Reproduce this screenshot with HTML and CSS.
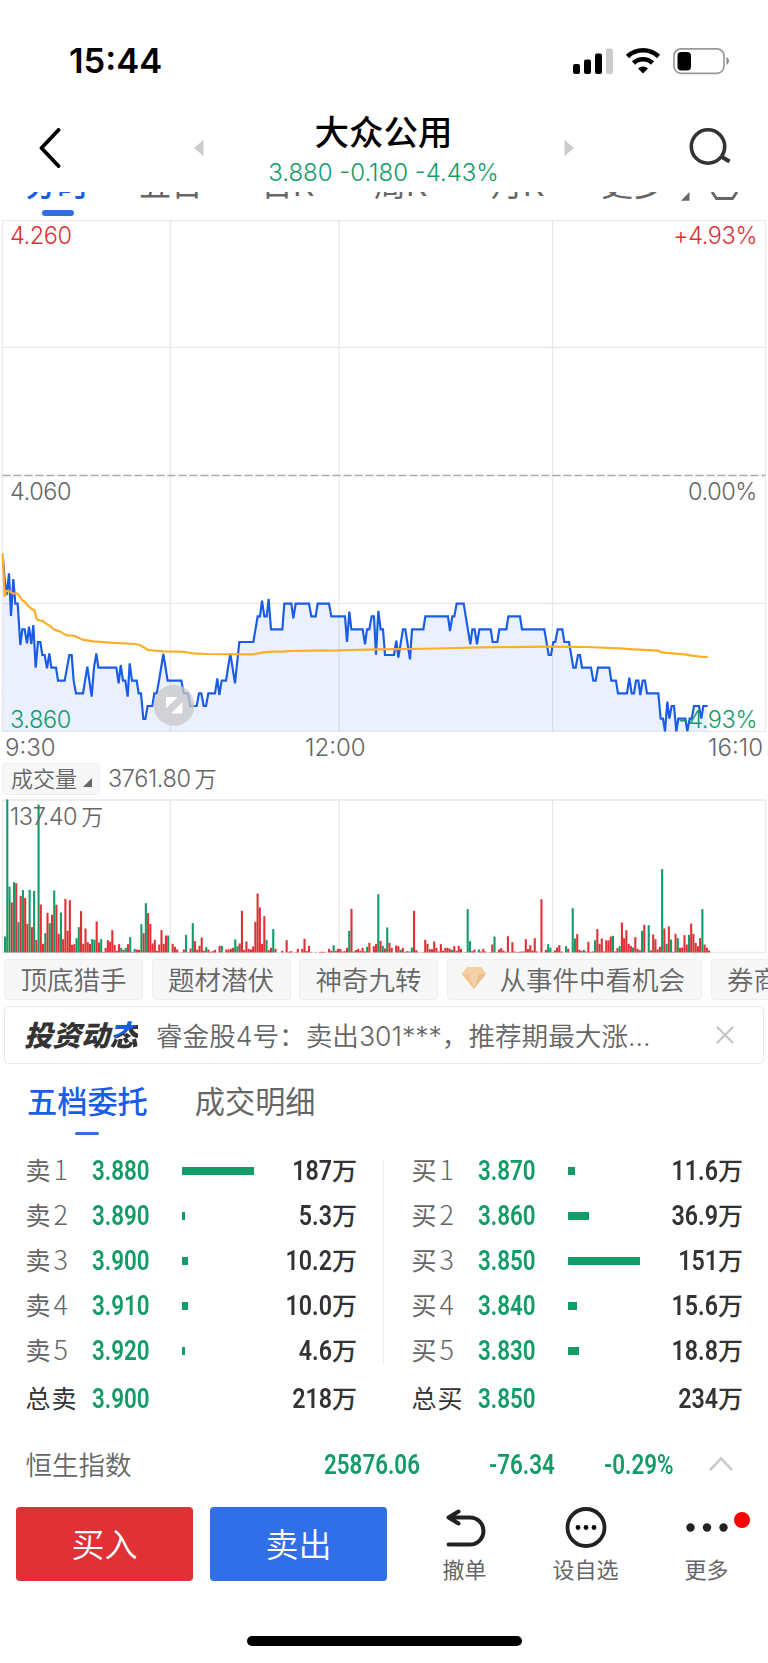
FILE: index.html
```html
<!DOCTYPE html>
<html lang="zh-CN">
<head>
    <meta charset="UTF-8">
    <meta name="viewport" content="width=device-width, initial-scale=1.0">
    <title>大众公用</title>
    <link rel="stylesheet" href="styles.css">
</head>
<body>
    <!-- Status bar -->
    <div class="status-bar">
        <span class="clock">15:44</span>
        <svg class="status-icons" width="160" height="28" viewBox="0 0 160 28">
            <rect x="1" y="16" width="7" height="10" rx="2"/>
            <rect x="12" y="11.500" width="7" height="14.500" rx="2"/>
            <rect x="23" y="5.500" width="7" height="20.500" rx="2"/>
            <rect x="34" y="0.500" width="7" height="25.500" rx="2" fill="#ccc"/>
            <g fill="none" stroke="#000" stroke-width="4.600">
                <path d="M55.500 8.500a22.500 22.500 0 0 1 31 0"/>
                <path d="M61.500 15a13.800 13.800 0 0 1 19 0"/>
            </g>
            <path d="M71 25.500l-5-5a7.300 7.300 0 0 1 10 0z"/>
            <rect x="102" y="0.800" width="50" height="24.500" rx="7" fill="none" stroke="#999" stroke-width="1.700"/>
            <rect x="105.500" y="4" width="13.500" height="18.500" rx="4"/>
            <path d="M154.500 9q2.500 1.200 2.500 4t-2.500 4z" fill="#888"/>
        </svg>
    </div>

    <!-- Title bar -->
    <div class="nav-bar">
        <svg class="back" width="22" height="40" viewBox="0 0 22 40"><path d="M19.500 2L2.500 20L19.500 38" fill="none" stroke="#000" stroke-width="3.800" stroke-linecap="round" stroke-linejoin="round"/></svg>
        <svg class="prev" width="10" height="16" viewBox="0 0 10 16"><path d="M9.500 0v16L0 8z" fill="#ccc"/></svg>
        <div class="stock">
            <h1>大众公用</h1>
            <p class="quote">3.880 -0.180 -4.43%</p>
        </div>
        <svg class="next" width="10" height="16" viewBox="0 0 10 16"><path d="M.5 0v16L10 8z" fill="#ccc"/></svg>
        <svg class="search" width="42" height="40" viewBox="0 0 42 40" fill="none" stroke="#333" stroke-width="3.600"><circle cx="19" cy="19.500" r="16.700"/><path d="M33 30l7.500 4.500" stroke-width="4.200"/></svg>
    </div>

    <!-- Period tabs, partly scrolled under the title bar -->
    <div class="periods">
        <span class="active">分时</span>
        <span>五日</span>
        <span>日K</span>
        <span>周K</span>
        <span>月K</span>
        <span>更多</span>
        <svg width="60" height="28" viewBox="0 0 60 28"><path d="M8.500 0v8.800H0z" fill="#666"/><path d="M31 0l4.500 6.500h16L56 0" fill="none" stroke="#666" stroke-width="2.800"/></svg>
    </div>

    <!-- Price chart -->
    <svg class="chart" width="768" height="512" viewBox="0 0 768 512">
        <g class="grid">
            <path d="M2.500 .5H765.500V511.500H2.500zM2.500 127.500H765.500M2.500 383.500H765.500M170.500 .5V511M339 .5V511M552.500 .5V511"/>
            <path class="dashed" d="M2.500 255.500H765.500"/>
        </g>
        <g id="price" transform="scale(.33333) translate(0 930)"></g>
        <circle cx="174" cy="485.300" r="20.500" fill="#c8c8c8" fill-opacity=".75"/>
        <path d="M166 477h11.500L166 488.500zM182.500 482v11.500H171z" fill="#fff"/>
        <text class="up" x="10" y="24">4.260</text>
        <text class="up end" x="757" y="24">+4.93%</text>
        <text x="10" y="280">4.060</text>
        <text class="end" x="757" y="280">0.00%</text>
        <text class="down" x="10" y="508">3.860</text>
        <text class="down end" x="757" y="508">-4.93%</text>
    </svg>
    <div class="times">
        <span>9:30</span>
        <span>12:00</span>
        <span>16:10</span>
    </div>

    <!-- Volume -->
    <div class="volume-head">
        <span class="indicator">成交量<svg width="9" height="9" viewBox="0 0 9 9"><path d="M9 0v9H0z" fill="#666"/></svg></span>
        <span>3761.80<i>万</i></span>
    </div>
    <svg class="chart" width="768" height="154" viewBox="0 0 768 154">
        <path class="grid" d="M2.500 1H765.500V153.500H2.500zM170.500 1V153M339 1V153M552.500 1V153"/>
        <g id="volume"></g>
        <text x="10" y="26">137.40<tspan class="unit" dx="4">万</tspan></text>
    </svg>

    <!-- Strategy chips -->
    <div class="chips">
        <span>顶底猎手</span>
        <span>题材潜伏</span>
        <span>神奇九转</span>
        <span class="gem"><svg width="24" height="22" viewBox="0 0 24 22"><path d="M5 0h14l5 7-12 15L0 7z" fill="#eebf8b"/><path d="M5 0h14l5 7H0z" fill="#f6cfa2"/><path d="M7 7h10l-5 15z" fill="#f2d2ac"/><path d="M0 7l12 15L7 7z" fill="#f5c48d"/></svg>从事件中看机会</span>
        <span>券商金股</span>
    </div>

    <div class="notice">
        <strong class="brand">投资动<span>态</span></strong>
        <span class="message">睿金股4号：卖出301***，推荐期最大涨…</span>
        <svg width="18" height="18" viewBox="0 0 18 18"><path d="M1.500 1.500l15 15M16.500 1.500l-15 15" stroke="#c6c6c6" stroke-width="2.400" stroke-linecap="round"/></svg>
    </div>

    <div class="book-tabs">
        <span class="active">五档委托</span>
        <span>成交明细</span>
    </div>

    <!-- Order book -->
    <div class="book">
        <div class="side sell">
            <div class="row"><span>卖<u>1</u></span><b class="num">3.880</b><i class="bar" style="width: 71.5px"></i><em><b class="num">187</b>万</em></div>
            <div class="row"><span>卖<u>2</u></span><b class="num">3.890</b><i class="bar" style="width: 2.5px"></i><em><b class="num">5.3</b>万</em></div>
            <div class="row"><span>卖<u>3</u></span><b class="num">3.900</b><i class="bar" style="width: 5.5px"></i><em><b class="num">10.2</b>万</em></div>
            <div class="row"><span>卖<u>4</u></span><b class="num">3.910</b><i class="bar" style="width: 5.5px"></i><em><b class="num">10.0</b>万</em></div>
            <div class="row"><span>卖<u>5</u></span><b class="num">3.920</b><i class="bar" style="width: 2.5px"></i><em><b class="num">4.6</b>万</em></div>
            <div class="row total"><span>总卖</span><b class="num">3.900</b><i></i><em><b class="num">218</b>万</em></div>
        </div>
        <div class="side buy">
            <div class="row"><span>买<u>1</u></span><b class="num">3.870</b><i class="bar" style="width: 6.5px"></i><em><b class="num">11.6</b>万</em></div>
            <div class="row"><span>买<u>2</u></span><b class="num">3.860</b><i class="bar" style="width: 20.5px"></i><em><b class="num">36.9</b>万</em></div>
            <div class="row"><span>买<u>3</u></span><b class="num">3.850</b><i class="bar" style="width: 71.5px"></i><em><b class="num">151</b>万</em></div>
            <div class="row"><span>买<u>4</u></span><b class="num">3.840</b><i class="bar" style="width: 8.5px"></i><em><b class="num">15.6</b>万</em></div>
            <div class="row"><span>买<u>5</u></span><b class="num">3.830</b><i class="bar" style="width: 11px"></i><em><b class="num">18.8</b>万</em></div>
            <div class="row total"><span>总买</span><b class="num">3.850</b><i></i><em><b class="num">234</b>万</em></div>
        </div>
    </div>

    <!-- Index ticker -->
    <div class="index-row">
        <span>恒生指数</span>
        <b class="num">25876.06</b>
        <b class="num">-76.34</b>
        <b class="num">-0.29%</b>
        <svg width="26" height="16" viewBox="0 0 26 16"><path d="M2 14L13 2.500L24 14" fill="none" stroke="#ccc" stroke-width="2.600"/></svg>
    </div>

    <!-- Bottom actions -->
    <div class="actions">
        <button class="buy-btn">买入</button>
        <button class="sell-btn">卖出</button>
        <div class="action">
            <svg width="42" height="42" viewBox="0 0 42 42" fill="none" stroke="#222" stroke-width="4" stroke-linecap="round" stroke-linejoin="round"><path d="M14.500 4.500L4.500 10.500L14.500 16.500M5 10.500H26a13.500 13.500 0 0 1 0 27H4.500"/></svg>
            <span>撤单</span>
        </div>
        <div class="action">
            <svg width="42" height="42" viewBox="0 0 42 42"><circle cx="21" cy="20.500" r="18.500" fill="none" stroke="#222" stroke-width="3.800"/><circle cx="13" cy="20.500" r="2.400"/><circle cx="21" cy="20.500" r="2.400"/><circle cx="29" cy="20.500" r="2.400"/></svg>
            <span>设自选</span>
        </div>
        <div class="action more">
            <svg width="42" height="42" viewBox="0 0 42 42" fill="#222"><circle cx="4.500" cy="20.500" r="4.200"/><circle cx="21" cy="20.500" r="4.200"/><circle cx="37.500" cy="20.500" r="4.200"/></svg>
            <span>更多</span>
        </div>
    </div>
    <div class="home-indicator"></div>

    <script src="chart.js"></script>
</body>
</html>
```

FILE: styles.css
```css
/* Global styles */
* {
    margin: 0;
    padding: 0;
    box-sizing: border-box;
}

body {
    width: 768px;
    height: 1663px;
    overflow: hidden;
    background: #fff;
    color: #666;
    font-family: Inter, 'Noto Sans CJK SC', sans-serif;
    font-size: 24px;
}

svg {
    display: block;
    flex: none;
}

i, em {
    font-style: normal;
}

u {
    text-decoration: none;
}

.status-bar {
    height: 110px;
    padding: 0 36px 0 69px;
    display: flex;
    justify-content: space-between;
    color: #000;
}

.clock {
    margin-top: 40px;
    font-size: 34.500px;
    font-weight: 600;
    line-height: 42px;
}

.status-icons {
    margin-top: 47.500px;
}

/* Title bar */
.nav-bar {
    height: 82px;
    display: flex;
    align-items: flex-start;
    padding-left: 38.500px;
}

.back {
    margin-top: 17.500px;
}

.prev {
    margin: 29.500px 0 0 133px;
}

.stock {
    width: 360px;
    text-align: center;
}

.stock h1 {
    margin-top: 3px;
    font-size: 34.500px;
    font-weight: 500;
    line-height: 40px;
    color: #000;
}

.quote {
    padding-top: 2px;
    line-height: 36px;
    font-weight: 350;
    color: #139c68;
}

.next {
    margin-top: 29.500px;
}

.search {
    margin: 17px 0 0 115.500px;
}

/* Period tabs */
.periods {
    height: 28px;
    overflow: hidden;
    display: grid;
    grid-template-columns: 114px 122px 113px 117px 110px 80px 60px;
    padding-left: 25px;
    font-size: 32px;
    line-height: 40px;
}

.periods span {
    margin-top: -27px;
}

.periods .active {
    color: #1a5ce6;
    font-weight: 500;
}

.periods .active::after {
    content: '';
    display: block;
    width: 32px;
    height: 6px;
    margin: 4.500px 0 0 17px;
    border-radius: 3px;
    background: #316fe8;
}

/* Charts */
.grid {
    fill: none;
    stroke: #e9e9e9;
    stroke-width: 1.3;
}

.dashed {
    stroke: #aaa;
    stroke-dasharray: 8 3;
}

.chart text {
    fill: #666;
    font-size: 23.500px;
    font-weight: 350;
    letter-spacing: -.4px;
}

.chart .up {
    fill: #e03137;
}

.chart .down {
    fill: #139c68;
}

.chart .end {
    text-anchor: end;
}

.chart .unit {
    font-size: 22px;
}

.price-area {
    fill: #316fe8;
    fill-opacity: .1;
}

.price-line {
    fill: none;
    stroke: #1a5ce6;
    stroke-width: 6.5;
}

.average-line {
    fill: none;
    stroke: #ffac26;
    stroke-width: 6.5;
}

.times {
    height: 30px;
    display: grid;
    grid-template-columns: 300px 1fr auto;
    padding: 0 5px;
    line-height: 31px;
    font-weight: 350;
}

.volume-head {
    height: 37px;
    display: flex;
    align-items: flex-start;
    gap: 8px;
    padding: 1px 0 0 2px;
    line-height: 32px;
    font-size: 23.500px;
    font-weight: 350;
    letter-spacing: -.4px;
}

.volume-head i {
    margin-left: 4px;
    font-size: 22px;
}

.indicator {
    width: 98px;
    height: 32px;
    display: flex;
    align-items: center;
    gap: 6px;
    padding-left: 8px;
    border: 1px solid #efefef;
    border-radius: 4px;
    background: #f7f7f7;
    font-size: 22px;
    letter-spacing: 0;
}

.indicator svg {
    margin-top: 6px;
}

/* Chips and notice */
.chips {
    width: 768px;
    height: 53px;
    overflow: hidden;
    display: flex;
    align-items: flex-start;
    gap: 8.500px;
    padding: 6px 0 0 4px;
    font-size: 26.500px;
    font-weight: 350;
}

.chips span {
    flex: none;
    display: flex;
    align-items: center;
    height: 41px;
    padding: 0 15.500px 2px;
    border: 1px solid #eee;
    border-radius: 4px;
    background: #f7f7f7;
}

.chips .gem {
    padding: 0 16px 2px 14px;
}

.chips svg {
    margin: 0 14px 2px 0;
}

.notice {
    width: 760px;
    height: 58px;
    margin-left: 4px;
    padding: 0 29px 0 19px;
    display: flex;
    align-items: center;
    border: 1.500px solid #e8e8e8;
    border-radius: 5px;
}

.brand {
    width: 132px;
    padding-bottom: 3px;
    font-size: 28.500px;
    font-weight: 900;
    font-style: italic;
    color: #333;
}

.brand span {
    background: linear-gradient(150deg, #1a5ce6 45%, #333 45%);
    background-clip: text;
    -webkit-background-clip: text;
    color: transparent;
}

.message {
    flex: 1;
    padding-bottom: 2px;
    font-size: 26.600px;
    font-weight: 350;
    white-space: nowrap;
}

.book-tabs {
    height: 84px;
    display: flex;
    gap: 47px;
    padding: 17px 0 0 27px;
    font-size: 30.200px;
    line-height: 42px;
}

.book-tabs .active {
    color: #1a5ce6;
    font-weight: 500;
}

.book-tabs .active::after {
    content: '';
    display: block;
    width: 24px;
    height: 3px;
    margin: 9px auto 0;
    border-radius: 2px;
    background: #316fe8;
}

/* Order book */
.book {
    height: 273px;
    display: flex;
}

.side {
    width: 384px;
}

.sell {
    padding-left: 25.500px;
    background: linear-gradient(#eee, #eee) 100% 13px / 1px 203px no-repeat;
}

.buy {
    padding-left: 27.500px;
}

.row {
    height: 45px;
    display: grid;
    grid-template-columns: 66px 90.500px 75px 100px;
    align-items: center;
    font-size: 25px;
    letter-spacing: 1px;
}

.row > span {
    padding-bottom: 3px;
}

.row u {
    margin-left: 2px;
    font-family: 'Noto Sans CJK SC', sans-serif;
    font-size: 27px;
    font-weight: 300;
    line-height: 30px;
}

.row .num {
    letter-spacing: 0;
}

.total {
    height: 50px;
    color: #333;
}

.bar {
    height: 8px;
    background: #139c68;
}

.row em {
    display: flex;
    justify-content: flex-end;
    align-items: center;
    padding-bottom: 3px;
    color: #333;
    font-weight: 500;
    letter-spacing: 0;
}

/* DIN-like condensed figures */
.num {
    font-family: Roboto, sans-serif;
    font-size: 28px;
    font-weight: 600;
    color: #139c68;
    transform: scaleX(.8);
    transform-origin: left;
}

.row em .num {
    padding-top: 3px;
    color: #333;
    transform: scaleX(.83);
    transform-origin: right;
}

.index-row {
    height: 86px;
    display: grid;
    grid-template-columns: 298px 165.500px 115px 104px 26px;
    align-items: center;
    padding-left: 25.500px;
    font-size: 26.500px;
    font-weight: 350;
}

.index-row span {
    padding-bottom: 2px;
}

/* Bottom actions */
.actions {
    height: 129px;
    display: flex;
    align-items: flex-start;
    padding-left: 16px;
}

.actions button {
    width: 177px;
    height: 74px;
    margin-right: 17px;
    padding-bottom: 2px;
    border: none;
    border-radius: 4px;
    color: #fff;
    font-family: inherit;
    font-size: 33px;
    font-weight: 350;
}

.buy-btn {
    background: #e03137;
}

.sell-btn {
    background: #316fe8;
}

.action {
    position: relative;
    width: 121px;
    display: flex;
    flex-direction: column;
    align-items: center;
    font-size: 22px;
    line-height: 42px;
}

.more::after {
    content: '';
    position: absolute;
    top: 4.500px;
    right: 17.500px;
    width: 16px;
    height: 16px;
    border-radius: 50%;
    background: #f00;
}

.home-indicator {
    width: 275px;
    height: 10px;
    margin-left: 247px;
    border-radius: 5px;
    background: #000;
}
```

FILE: chart.js
```js
const SVG_NS = 'http://www.w3.org/2000/svg';

function draw(parent, tag, attrs) {
    const el = document.createElementNS(SVG_NS, tag);
    for (const key in attrs) {
        el.setAttribute(key, attrs[key]);
    }
    parent.appendChild(el);
}

// Price and average lines
const price = '9,85 14,150 20,195 27,130 33,258 40,147 46,221 53,221 61,345 67,298 74,298 81,340 87,290 94,342 100,285 107,413 114,336 121,336 127,375 134,375 141,415 148,370 154,413 168,413 174,452 194,452 208,375 215,375 221,452 228,490 249,490 262,410 275,500 282,413 289,370 295,413 349,413 356,460 362,405 369,452 376,452 383,500 389,400 396,452 410,452 416,490 423,490 430,567 436,567 443,528 457,528 463,490 470,490 477,452 490,372 503,452 544,452 551,490 564,490 571,528 590,528 597,490 604,490 611,528 618,528 625,490 645,490 652,445 658,495 665,452 678,452 691,370 705,460 718,336 ' +
    '760,336 773,259 780,259 786,212 793,259 800,259 806,207 813,298 847,298 853,221 874,221 880,265 887,221 927,221 934,259 947,259 953,221 987,221 994,259 1035,259 1041,336 1048,245 1054,298 1088,298 1095,343 1101,298 1108,298 1115,259 1122,259 1128,374 1135,243 1142,298 1149,298 1155,375 1182,375 1189,332 1195,383 1209,298 1216,298 1230,388 1236,298 1270,298 1276,259 1344,259 1350,303 1357,259 1363,259 1370,221 1391,221 1411,343 1417,298 1424,298 1431,343 1438,298 1472,298 1478,336 1492,336 1498,298 1519,298 1525,259 ' +
    '1560,259 1566,298 1633,298 1646,375 1653,375 1660,336 1666,336 1673,298 1687,298 1693,336 1707,336 1720,413 1727,413 1734,375 1740,375 1746,413 1773,413 1780,452 1787,452 1794,413 1828,413 1834,452 1848,452 1854,490 1881,490 1888,443 1895,490 1902,490 1908,452 1915,452 1921,495 1928,452 1935,452 1941,490 1975,490 1982,566 1989,566 1995,604 2002,515 2008,566 2015,528 2022,528 2029,604 2035,566 2056,566 2062,604 2069,566 2075,566 2082,528 2097,528 2104,566 2110,528 2123,528';
const average = '8,70 14,200 18,182 30,184 38,190 52,191 60,200 66,210 76,217 82,226 90,232 98,239 103,240 110,267 118,271 126,272 138,281 148,286 160,297 172,302 182,305 190,311 202,316 220,317 232,322 248,329 280,334 330,338 405,342 420,345 444,360 490,364 545,365 580,370 620,372 755,373 765,372 790,367 820,365 850,365 870,363 930,362 1020,361 1050,360 1130,358 1230,357 1370,354 1440,352 1640,350 1760,351 1860,355 1900,358 1975,362 1985,367 2060,374 2075,377 2100,380 2123,381';

const priceGroup = document.getElementById('price');
draw(priceGroup, 'polygon', { points: `8,604 ${price} 2123,604`, class: 'price-area' });
draw(priceGroup, 'polyline', { points: price, class: 'price-line' });
draw(priceGroup, 'polyline', { points: average, class: 'average-line' });

// Volume per minute, negative when the price fell
const volumes = [
    -48, -459, -198, 150, -211, 208, -91, 170, -187, 164,
    86, -188, 76, -185, 38, -444, 144, 26, -58, 119,
    -88, 113, -186, 143, 56, -120, 40, 161, 65, 157,
    23, 25, -43, -76, 124, 26, 72, 31, 26, -40,
    -38, 93, 30, -40, 2, 14, 37, 32, 67, 23,
    5, 25, -14, 8, -14, 25, -46, 2, -11, 9,
    8, -85, 58, -148, 118, 86, 27, 38, 5, 24,
    67, 26, 51, -51, 0, 26, 17, 9, 0, 1,
    9, -53, 1, 12, -88, 34, 8, 20, 45, 5,
    -16, 9, 2, 4, 8, 0, 20, -20, 0, 9,
    9, 11, 14, -39, -19, 27, 125, 8, 33, 11,
    9, 18, 92, 177, 135, 26, 109, -38, 7, 14,
    -70, 11, 0, 0, 5, 0, 37, 2, 4, 0,
    1, 11, 0, 11, 41, 4, 20, 1, 0, 1,
    0, 2, 2, 2, 0, 11, 5, -22, 5, 11,
    11, 3, 4, 14, -65, 131, -3, 7, 11, 5,
    14, 3, -17, 29, 0, 19, 26, -175, 35, -20,
    12, -75, 29, 14, 0, 21, 19, -8, 14, 2,
    4, -3, -15, 125, 7, 1, 0, 1, 38, 26,
    10, 10, 33, 14, 3, 25, 5, 14, 14, 11,
    -8, 19, 5, 20, 11, 0, 1, -130, -34, 4,
    9, 0, -9, 3, 11, 3, 0, 1, 24, -48,
    1, 9, 13, 6, 2, 49, 1, 31, 3, 1,
    2, 3, -3, 40, 10, 22, 6, 43, 3, 0,
    160, 0, 8, -25, -14, 1, 6, 15, 22, 3,
    0, -19, 11, 0, -133, -42, 55, 8, 5, -8,
    3, 32, 2, 3, -37, 70, 26, 42, 3, 37,
    36, 48, -50, 3, 13, -19, 90, 43, 67, 26,
    20, -15, 46, 11, 7, -65, 83, 0, -82, 6,
    54, 40, 9, 17, -250, 72, -26, 78, -39, 2,
    56, -43, 14, 15, 52, 24, -53, 87, 56, 29,
    19, 43, -130, 24, 14, 6
];

const volumeGroup = document.getElementById('volume');
volumes.forEach((value, i) => {
    const height = Math.abs(value) / 3;
    draw(volumeGroup, 'rect', {
        x: 4 + i * 2.235,
        y: 153.5 - height,
        width: 2.1,
        height: height,
        fill: value < 0 ? '#139c68' : '#e03137'
    });
});
```
